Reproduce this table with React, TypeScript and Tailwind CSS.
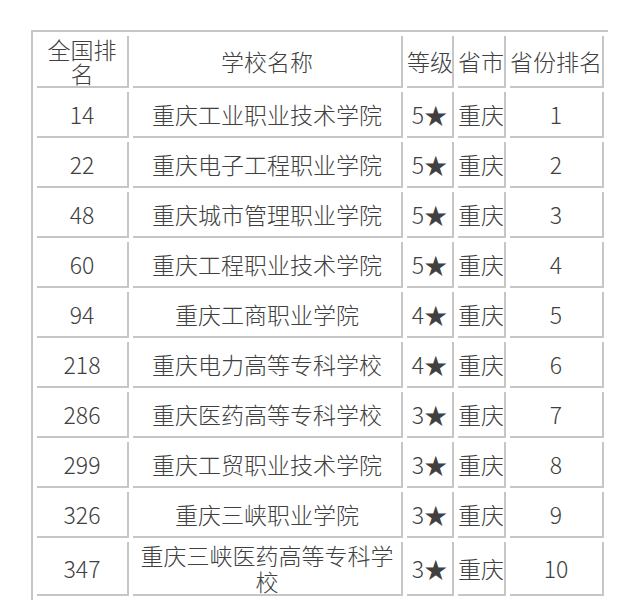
const rows: [string, string, string, string, string][] = [
  ["14", "重庆工业职业技术学院", "5★", "重庆", "1"],
  ["22", "重庆电子工程职业学院", "5★", "重庆", "2"],
  ["48", "重庆城市管理职业学院", "5★", "重庆", "3"],
  ["60", "重庆工程职业技术学院", "5★", "重庆", "4"],
  ["94", "重庆工商职业学院", "4★", "重庆", "5"],
  ["218", "重庆电力高等专科学校", "4★", "重庆", "6"],
  ["286", "重庆医药高等专科学校", "3★", "重庆", "7"],
  ["299", "重庆工贸职业技术学院", "3★", "重庆", "8"],
  ["326", "重庆三峡职业学院", "3★", "重庆", "9"],
  ["347", "重庆三峡医药高等专科学校", "3★", "重庆", "10"],
];

const cell =
  "border-r-2 border-b-2 border-[#c6c6c6] text-center align-middle px-0 py-0 h-[46px]";

const App = () => {
  return (
    <div
      className="w-[640px] h-[604px] overflow-hidden bg-white pl-[31px] pt-[30px] text-[23px] leading-[26px] font-light text-[#404040]"
      style={{ fontFamily: '"Noto Sans CJK SC", "Noto Sans", sans-serif' }}
    >
      <table className="table-fixed w-[577px] border-separate border-spacing-1 border-t-2 border-l-2 border-[#c6c6c6]">
        <colgroup>
          <col className="w-[92px]" />
          <col className="w-[270px]" />
          <col className="w-[47px]" />
          <col className="w-[48px]" />
          <col className="w-[94px]" />
        </colgroup>
        <thead>
          <tr>
            <th className={`${cell} font-light h-[52px]`}>
              <div className="leading-[24px]">全国排</div>
              <div className="leading-[24px]">名</div>
            </th>
            <th className={`${cell} font-light`}>学校名称</th>
            <th className={`${cell} font-light whitespace-nowrap`}>等级</th>
            <th className={`${cell} font-light whitespace-nowrap`}>省市</th>
            <th className={`${cell} font-light whitespace-nowrap`}>省份排名</th>
          </tr>
        </thead>
        <tbody>
          {rows.map(([rank, name, level, city, prov]) => (
            <tr key={rank}>
              <td className={cell}>{rank}</td>
              <td className={`${cell} px-1`}>{name}</td>
              <td className={`${cell} whitespace-nowrap`}>{level}</td>
              <td className={`${cell} whitespace-nowrap`}>{city}</td>
              <td className={cell}>{prov}</td>
            </tr>
          ))}
        </tbody>
      </table>
    </div>
  );
};

export default App;
